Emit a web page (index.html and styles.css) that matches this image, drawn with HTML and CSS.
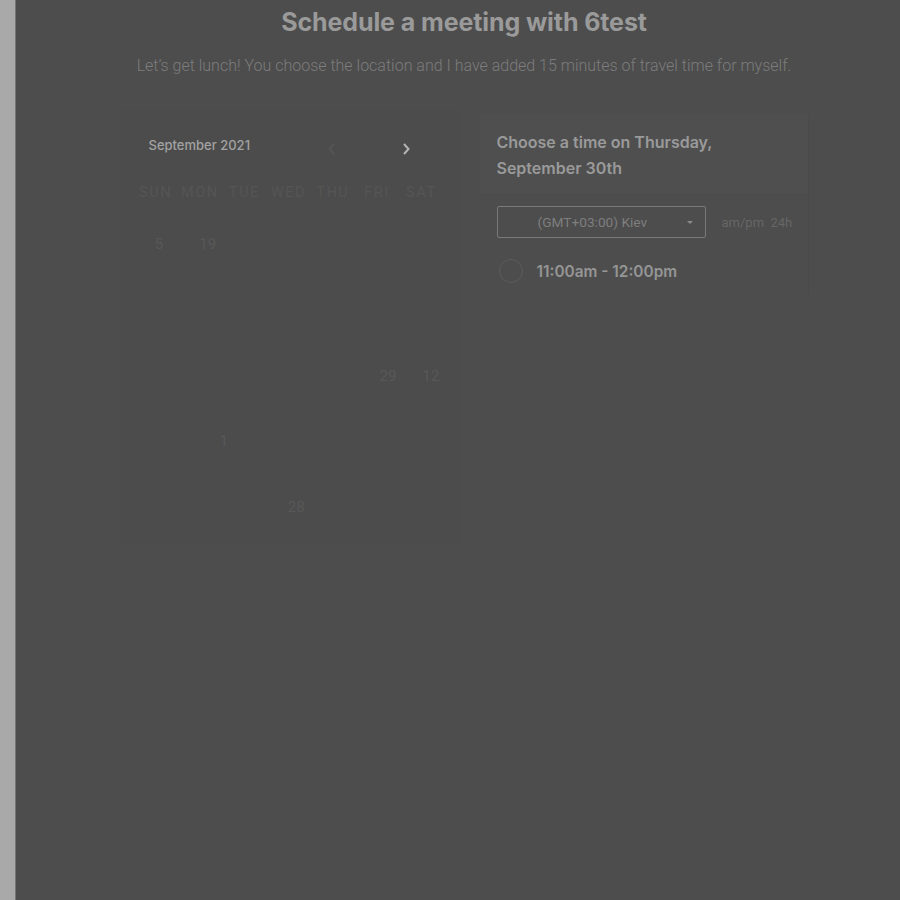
FILE: index.html
```html
<!DOCTYPE html>
<html>
<head>
<meta charset="utf-8">
<link rel="stylesheet" href="styles.css">
</head>
<body>
<div class="page">
  <aside class="strip"></aside>
  <main class="main">
    <h1 class="title">Schedule a meeting with 6test</h1>
    <p class="subtitle">Let’s get lunch! You choose the location and I have added 15 minutes of travel time for myself.</p>
    <div class="columns">
      <section class="calendar">
        <div class="cal-head">
          <span class="month">September 2021</span>
          <div class="navs">
            <svg class="chev prev" width="10" height="14" viewBox="0 0 10 14"><path d="M7 2 L2.5 7 L7 12" fill="none" stroke="currentColor" stroke-width="2"/></svg>
            <svg class="chev next" width="10" height="14" viewBox="0 0 10 14"><path d="M3 2 L7.5 7 L3 12" fill="none" stroke="currentColor" stroke-width="2"/></svg>
          </div>
        </div>
        <div class="grid dows">
          <span>SUN</span><span>MON</span><span>TUE</span><span>WED</span><span>THU</span><span>FRI</span><span>SAT</span>
        </div>
        <div class="grid days">
          <span>5</span><span class="nudge">19</span><span></span><span></span><span></span><span></span><span></span>
          <span></span><span></span><span></span><span></span><span></span><span></span><span></span>
          <span></span><span></span><span></span><span></span><span></span><span class="nudge2">29</span><span class="nudge2">12</span>
          <span></span><span class="nudge3">1</span><span></span><span></span><span></span><span></span><span></span>
          <span></span><span></span><span></span><span class="nudge">28</span><span></span><span></span><span></span>
        </div>
      </section>
      <section class="times">
        <div class="times-head">Choose a time on Thursday, September 30th</div>
        <div class="tz-row">
          <div class="select">
            <span class="select-text">(GMT+03:00) Kiev</span>
            <span class="caret"></span>
          </div>
          <span class="fmt">am/pm&nbsp;&nbsp;24h</span>
        </div>
        <div class="slot">
          <span class="radio"></span>
          <span class="slot-text">11:00am - 12:00pm</span>
        </div>
      </section>
    </div>
  </main>
</div>
</body>
</html>
```
FILE: styles.css
```css
html, body {
  margin: 0;
  padding: 0;
  height: 100%;
  background: #4d4d4d;
}
.page {
  display: flex;
  min-height: 900px;
  font-family: Inter, "Noto Sans", sans-serif;
}
.strip {
  width: 15px;
  flex: none;
  background: #a9a9a9;
  border-right: 1px solid #767676;
}
.main {
  flex: 1;
  background: #4d4d4d;
  display: flex;
  flex-direction: column;
  align-items: center;
  padding-left: 12px;
}
.title {
  margin: 6px 0 0;
  font-size: 25px;
  font-weight: 700;
  color: #9a9a9a;
  letter-spacing: -0.1px;
  line-height: 32px;
}
.subtitle {
  margin: 18px 0 0;
  font-family: Roboto, sans-serif;
  font-weight: 300;
  font-size: 16px;
  color: #7c7c7c;
  line-height: 19px;
}
.columns {
  display: flex;
  gap: 20px;
  margin-top: 35px;
  margin-left: 0;
}
.calendar {
  width: 340px;
  height: 435px;
  background: #4c4c4c;
  box-sizing: border-box;
  padding: 19px 17px 0 17px;
}
.cal-head {
  display: flex;
  align-items: center;
  justify-content: space-between;
  padding-left: 12px;
  height: 32px;
}
.month {
  font-size: 13px;
  font-weight: 500;
  color: #a2a2a2;
}
.navs {
  display: flex;
  gap: 64px;
  margin-right: 32px;
  margin-top: 7px;
}
.chev.prev { color: #555555; }
.chev.next { color: #b4b4b4; }
.grid {
  display: grid;
  grid-template-columns: repeat(7, 1fr);
  text-align: center;
}
.dows {
  margin-top: 23px;
  margin-left: -3px;
  margin-right: -1px;
  font-size: 14.5px;
  letter-spacing: 1.6px;
  color: #555555;
  font-family: Roboto, sans-serif;
}
.days {
  margin-top: 34px;
  grid-auto-rows: 65.8px;
  font-family: Roboto, sans-serif;
  font-size: 15px;
  color: #585858;
}
.days span { padding-left: 2px; }
.days .nudge { padding-left: 8px; }
.days .nudge2 { padding-left: 20px; }
.days .nudge3 { padding-left: 40px; }
.times {
  width: 328px;
  align-self: flex-start;
  margin-top: 4px;
  border-right: 1px solid #4a4a4a;
  padding-bottom: 12px;
}
.times-head {
  background: #4f4f4f;
  padding: 15px 60px 13px 17px;
  font-size: 16px;
  font-weight: 600;
  line-height: 26px;
  color: #9a9a9a;
  border-bottom: 1px solid #4b4b4b;
}
.tz-row {
  display: flex;
  align-items: center;
  gap: 16px;
  padding: 11px 0 0 17px;
}
.select {
  width: 207px;
  height: 30px;
  border: 1px solid #7a7a7a;
  border-radius: 2px;
  display: flex;
  align-items: center;
  position: relative;
}
.select-text {
  font-family: Roboto, sans-serif;
  font-size: 13.7px;
  color: #7e7e7e;
  margin-left: 40px;
}
.caret {
  position: absolute;
  right: 12px;
  top: 14px;
  border-left: 3px solid transparent;
  border-right: 3px solid transparent;
  border-top: 3px solid #8a8a8a;
}
.fmt {
  font-family: Roboto, sans-serif;
  font-size: 13px;
  color: #666666;
}
.slot {
  display: flex;
  align-items: center;
  gap: 14px;
  padding: 21px 0 0 19px;
}
.radio {
  width: 22px;
  height: 22px;
  border-radius: 50%;
  border: 1px solid #5c5c5c;
}
.slot-text {
  font-size: 15.4px;
  font-weight: 600;
  color: #959595;
}
```
